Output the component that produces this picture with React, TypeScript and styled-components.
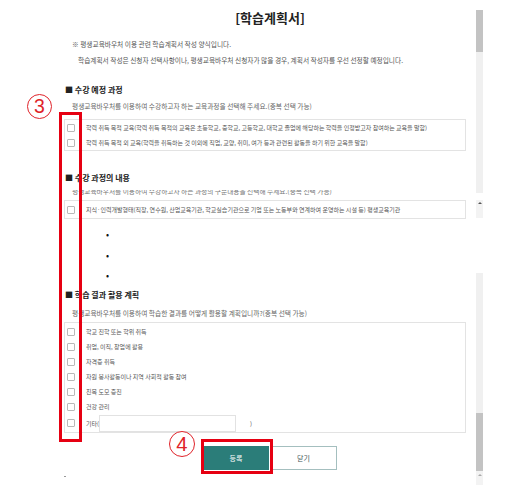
import React from "react";
import styled, { createGlobalStyle } from "styled-components";

const GlobalStyle = createGlobalStyle`
  html, body { margin: 0; padding: 0; background: #fff; }
  body { font-family: "Noto Sans CJK KR", "Noto Sans", sans-serif; }
  * { box-sizing: border-box; }
`;

const Page = styled.div`
  position: relative;
  width: 513px;
  height: 485px;
  overflow: hidden;
  display: flex;
  padding-left: 64px;
  background: #fff;
`;

const Content = styled.main`
  width: 412px;
  display: flex;
  flex-direction: column;
`;

const Title = styled.h1`
  margin: 8px 0 0;
  height: 20px;
  line-height: 20px;
  font-size: 13px;
  font-weight: 700;
  color: #222;
  text-align: center;
`;

const Notes = styled.div`
  margin-top: 8px;
  padding-left: 8px;
  font-size: 6.7px;
  line-height: 16px;
  color: #555;
`;

const NoteLine = styled.div<{ $indent?: number }>`
  padding-left: ${(p) => p.$indent ?? 0}px;
  white-space: nowrap;
`;

const SectionHeader = styled.h2<{ $mt: number }>`
  margin: ${(p) => p.$mt}px 0 0;
  padding-left: 1px;
  font-size: 8px;
  line-height: 12px;
  font-weight: 700;
  color: #222;
`;

const Desc = styled.p<{ $mt: number }>`
  margin: ${(p) => p.$mt}px 0 0;
  padding-left: 8px;
  font-size: 6.7px;
  line-height: 12px;
  color: #666;
  white-space: nowrap;
`;

const ClipStrip = styled.div`
  margin-top: 6px;
  height: 5px;
  overflow: hidden;
`;

const ClipText = styled(Desc)`
  margin-top: -5px;
  color: #777;
`;

const OptionBox = styled.div<{ $mt: number; $pt?: number }>`
  margin-top: ${(p) => p.$mt}px;
  width: 402px;
  border: 1px solid #e3e3e3;
  padding: ${(p) => p.$pt ?? 0}px 0 0 2px;
  display: flex;
  flex-direction: column;
`;

const OptionRow = styled.label<{ $h: number }>`
  height: ${(p) => p.$h}px;
  display: flex;
  align-items: center;
  gap: 11px;
  font-size: 6px;
  color: #555;
  white-space: nowrap;
`;

const Check = styled.span`
  width: 8px;
  height: 8px;
  flex: none;
  border: 1px solid #b9b9b9;
  border-radius: 1px;
  background: #fff;
`;

const EtcInput = styled.span`
  width: 137px;
  height: 17px;
  margin: 0 3px 0 1px;
  border: 1px solid #e2e2e2;
  background: #fff;
`;

const BulletList = styled.ul`
  list-style: none;
  margin: 6px 0 0;
  padding: 0 0 0 42px;
`;

const Bullet = styled.li`
  height: 20.5px;
  line-height: 20.5px;
  font-size: 9px;
  color: #111;
  &::before { content: "•"; }
`;

const ButtonRow = styled.div`
  margin-top: 13px;
  display: flex;
  justify-content: center;
`;

const Btn = styled.button<{ $primary?: boolean; $w: number }>`
  width: ${(p) => p.$w}px;
  height: 24px;
  padding: 0;
  margin-left: ${(p) => (p.$primary ? 0 : 1)}px;
  border: 1px solid ${(p) => (p.$primary ? "#2b7d79" : "#a4bfbf")};
  background: ${(p) => (p.$primary ? "#2b7d79" : "#fff")};
  color: ${(p) => (p.$primary ? "#fff" : "#3c5555")};
  font-family: "Noto Sans CJK KR", sans-serif;
  font-size: 7px;
`;

const TinyDot = styled.div`
  margin-top: 6px;
  width: 2px;
  height: 1px;
  background: #999;
`;

const Scrollbar = styled.div`
  width: 7px;
  display: flex;
  flex-direction: column;
`;

const ScrollSeg = styled.div<{ $h: number; $c: string }>`
  height: ${(p) => p.$h}px;
  background: ${(p) => p.$c};
  display: flex;
  justify-content: center;
  flex: none;
`;

const Arrow = styled.span<{ $mt: number; $c: string }>`
  margin-top: ${(p) => p.$mt}px;
  width: 0;
  height: 0;
  border-left: 2px solid transparent;
  border-right: 2px solid transparent;
  border-bottom: 2px solid ${(p) => p.$c};
`;

const RedBox = styled.div<{ $l: number; $t: number; $w: number; $h: number }>`
  position: absolute;
  left: ${(p) => p.$l}px;
  top: ${(p) => p.$t}px;
  width: ${(p) => p.$w}px;
  height: ${(p) => p.$h}px;
  border: 3px solid #e60012;
`;

const Marker = styled.div<{ $l: number; $t: number; $s: number }>`
  position: absolute;
  left: ${(p) => p.$l}px;
  top: ${(p) => p.$t}px;
  width: ${(p) => p.$s}px;
  height: ${(p) => p.$s}px;
  border: 1.5px solid #e0232a;
  border-radius: 50%;
  display: flex;
  align-items: center;
  justify-content: center;
  color: #e0232a;
  font-family: "Liberation Sans", Arial, sans-serif;
  font-size: ${(p) => p.$s * 0.78}px;
  line-height: 1;
  background: #fff;
`;

const course = [
  "학력 취득 목적 교육(학력 취득 목적의 교육은 초등학교, 중학교, 고등학교, 대학교 졸업에 해당하는 학력을 인정받고자 참여하는 교육을 말함)",
  "학력 취득 목적 외 교육(학력을 취득하는 것 이외에 직업, 교양, 취미, 여가 등과 관련된 활동을 하기 위한 교육을 말함)",
];

const results = [
  "학교 진학 또는 학위 취득",
  "취업, 이직, 창업에 활용",
  "자격증 취득",
  "자원 봉사활동이나 지역 사회적 활동 참여",
  "친목 도모 증진",
  "건강 관리",
];

export default function App() {
  return (
    <>
      <GlobalStyle />
      <Page>
        <Content>
          <Title>[학습계획서]</Title>
          <Notes>
            <NoteLine>※ 평생교육바우처 이용 관련 학습계획서 작성 양식입니다.</NoteLine>
            <NoteLine $indent={6}>
              학습계획서 작성은 신청자 선택사항이나, 평생교육바우처 신청자가 많을 경우, 계획서 작성자를 우선 선정할 예정입니다.
            </NoteLine>
          </Notes>

          <SectionHeader $mt={16}>■ 수강 예정 과정</SectionHeader>
          <Desc $mt={4}>평생교육바우처를 이용하여 수강하고자 하는 교육과정을 선택해 주세요.(중복 선택 가능)</Desc>
          <OptionBox $mt={7}>
            {course.map((c) => (
              <OptionRow key={c} $h={15}>
                <Check />
                {c}
              </OptionRow>
            ))}
          </OptionBox>

          <SectionHeader $mt={21}>■ 수강 과정의 내용</SectionHeader>
          <ClipStrip>
            <ClipText $mt={0}>평생교육바우처를 이용하여 수강하고자 하는 과정의 구분내용을 선택해 주세요.(중복 선택 가능)</ClipText>
          </ClipStrip>
          <OptionBox $mt={5}>
            <OptionRow $h={17}>
              <Check />
              지식·인력개발형태(직장, 연수원, 산업교육기관, 학교실습기관으로 기업 또는 노동부와 연계하여 운영하는 시설 등) 평생교육기관
            </OptionRow>
          </OptionBox>
          <BulletList>
            <Bullet />
            <Bullet />
            <Bullet />
          </BulletList>

          <SectionHeader $mt={2.5}>■ 학습 결과 활용 계획</SectionHeader>
          <Desc $mt={6}>평생교육바우처를 이용하여 학습한 결과를 어떻게 활용할 계획입니까?(중복 선택 가능)</Desc>
          <OptionBox $mt={3} $pt={1}>
            {results.map((r) => (
              <OptionRow key={r} $h={15}>
                <Check />
                {r}
              </OptionRow>
            ))}
            <OptionRow $h={18}>
              <Check />
              <span>
                기타(
              </span>
              <EtcInput style={{ marginLeft: -11 }} />
              <span>)</span>
            </OptionRow>
          </OptionBox>

          <ButtonRow>
            <Btn $primary $w={66}>등록</Btn>
            <Btn $w={67}>닫기</Btn>
          </ButtonRow>
          <TinyDot />
        </Content>

        <Scrollbar>
          <ScrollSeg $h={10} $c="#fff" />
          <ScrollSeg $h={42} $c="#c3c3c3" />
          <ScrollSeg $h={141} $c="#f0f0f0" />
          <ScrollSeg $h={7} $c="#fff" />
          <ScrollSeg $h={18} $c="#f3f3f3">
            <Arrow $mt={2} $c="#555" />
          </ScrollSeg>
          <ScrollSeg $h={55} $c="#fff" />
          <ScrollSeg $h={140} $c="#f0f0f0" />
          <ScrollSeg $h={58} $c="#c3c3c3" />
          <ScrollSeg $h={14} $c="#f3f3f3">
            <Arrow $mt={3} $c="#aaa" />
          </ScrollSeg>
        </Scrollbar>

        <Marker $l={27} $t={94} $s={25}>3</Marker>
        <RedBox $l={59} $t={112} $w={23} $h={330} />
        <Marker $l={169} $t={431} $s={26}>4</Marker>
        <RedBox $l={201} $t={439} $w={72} $h={35} />
      </Page>
    </>
  );
}
